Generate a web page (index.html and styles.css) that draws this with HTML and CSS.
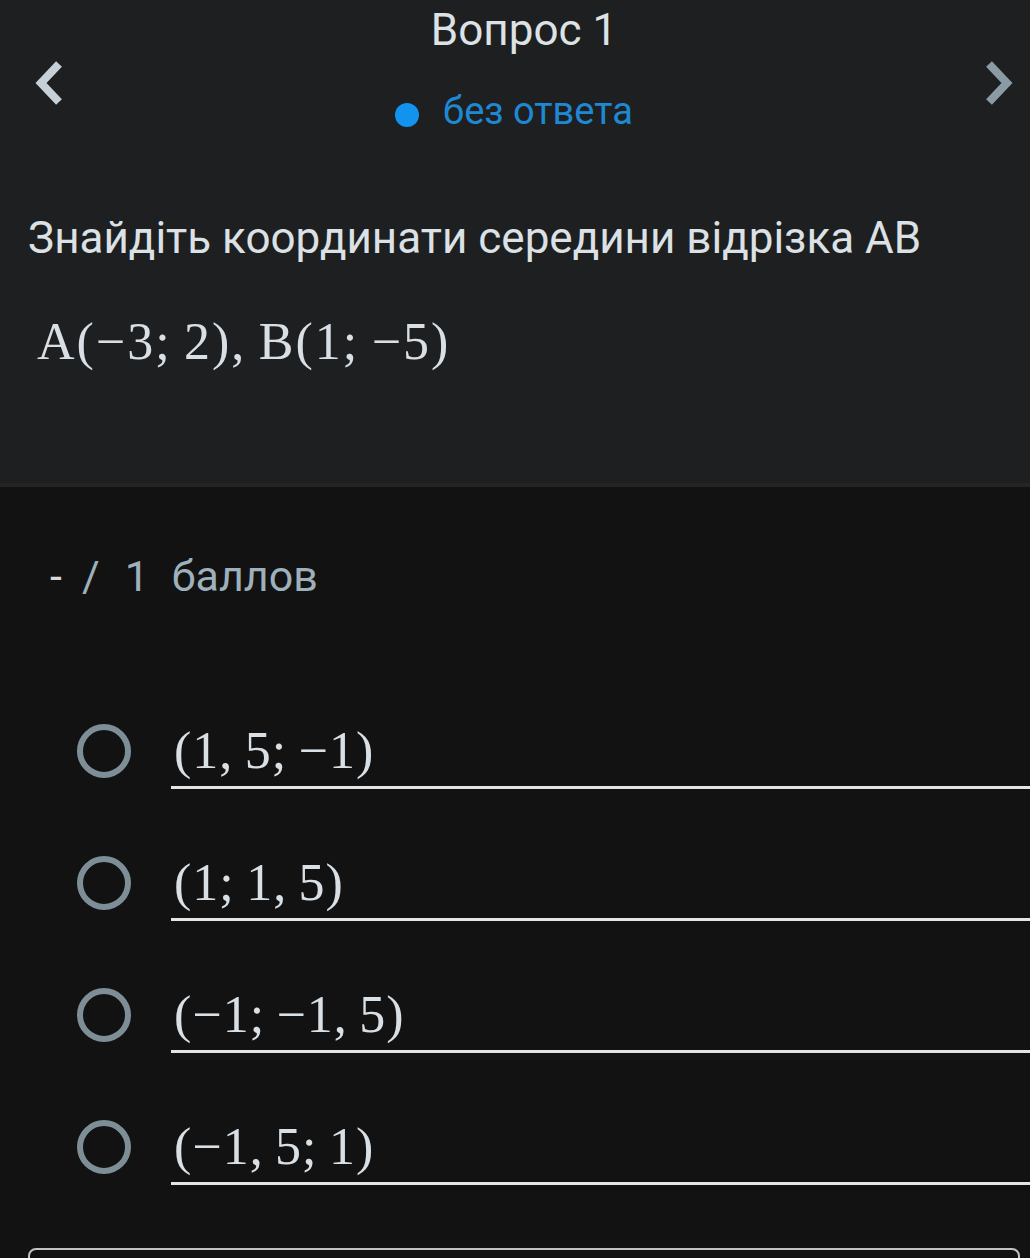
FILE: index.html
```html
<!doctype html>
<html>
<head>
    <meta charset="utf-8">
    <title>Вопрос 1</title>
    <link rel="stylesheet" href="styles.css">
</head>
<body>
    <div class="top">
        <div class="nav">
            <a class="arrow prev" href="#">
                <svg width="30" height="46" viewBox="0 0 30 46"><path d="M25 4 L7 23 L25 42" fill="none" stroke="currentColor" stroke-width="8"/></svg>
            </a>
            <div class="head">
                <div class="title">Вопрос 1</div>
                <div class="status"><span class="dot"></span>без ответа</div>
            </div>
            <a class="arrow next" href="#">
                <svg width="30" height="46" viewBox="0 0 30 46"><path d="M5 4 L23 23 L5 42" fill="none" stroke="currentColor" stroke-width="8"/></svg>
            </a>
        </div>
        <p class="question">Знайдіть координати середини відрізка AB</p>
        <p class="math formula">A(−3;&thinsp;2),&thinsp;B(1;&thinsp;−5)</p>
    </div>

    <div class="bottom">
        <div class="points"><span class="got">-</span><span class="sep">/</span><span class="max">1</span>баллов</div>
        <ul class="options">
            <li><span class="radio"></span><span class="label math">(1,&thinsp;5;&thinsp;−1)</span></li>
            <li><span class="radio"></span><span class="label math">(1;&thinsp;1,&thinsp;5)</span></li>
            <li><span class="radio"></span><span class="label math">(−1;&thinsp;−1,&thinsp;5)</span></li>
            <li><span class="radio"></span><span class="label math">(−1,&thinsp;5;&thinsp;1)</span></li>
        </ul>
        <div class="box"></div>
    </div>
</body>
</html>
```

FILE: styles.css
```css
*{margin:0; padding:0;}
ul{list-style:none;}
a{text-decoration:none;}

body{
    background:#121212;
    font-family:Roboto, "Noto Sans", sans-serif;
    color:#dde2e5;
}

.top{
    height:483px;
    background:#1e1f21;
    border-bottom:4px solid #232426;
}
.nav{
    display:flex;
    padding-top:3px;
}
.arrow{
    display:block;
    margin-top:57px;
    height:46px;
}
.arrow.prev{
    margin-left:34px;
    color:#c6d0d6;
}
.arrow.next{
    margin-right:16px;
    color:#8a9ba4;
}
.head{
    flex:1;
    text-align:center;
}
.title{
    font-size:44px;
    line-height:54px;
}
.status{
    display:flex;
    justify-content:center;
    align-items:center;
    margin-top:31px;
    padding-right:20px;
    font-size:38px;
    line-height:46px;
    color:#1f88d2;
}
.dot{
    width:24px;
    height:24px;
    margin-top:8px;
    margin-right:24px;
    border-radius:50%;
    background:#1294ee;
}

.question{
    margin-top:78px;
    padding-left:28px;
    font-size:44px;
    line-height:52px;
    color:#dbe1e5;
}
.math{
    font-family:"Liberation Serif", "DejaVu Serif", serif;
    font-size:52px;
    line-height:60px;
    letter-spacing:1px;
    color:#d8e0e6;
}
.formula{
    margin-top:48px;
    padding-left:37px;
    letter-spacing:2px;
}

.bottom{
    padding-top:64px;
}
.points{
    padding-left:50px;
    font-size:43px;
    line-height:50px;
    color:#9eb0bb;
}
.points .got{
    color:#d6d9db;
    margin-right:20px;
}
.points .sep{
    margin-right:25px;
}
.points .max{
    margin-right:23px;
}

.options{
    margin-top:120px;
    padding-left:77px;
    display:flex;
    flex-direction:column;
    gap:64px;
}
.options li{
    display:flex;
    align-items:flex-end;
}
.radio{
    flex:none;
    width:42px;
    height:42px;
    margin-bottom:11px;
    margin-right:40px;
    border:6px solid #7d8e97;
    border-radius:50%;
}
.label{
    flex:1;
    height:60px;
    padding-bottom:5px;
    padding-left:3px;
    border-bottom:3px solid #e2e4e5;
}

.box{
    margin:63px 10px 0 28px;
    height:120px;
    border:2px solid #bfc3c5;
    border-radius:8px;
}
```
